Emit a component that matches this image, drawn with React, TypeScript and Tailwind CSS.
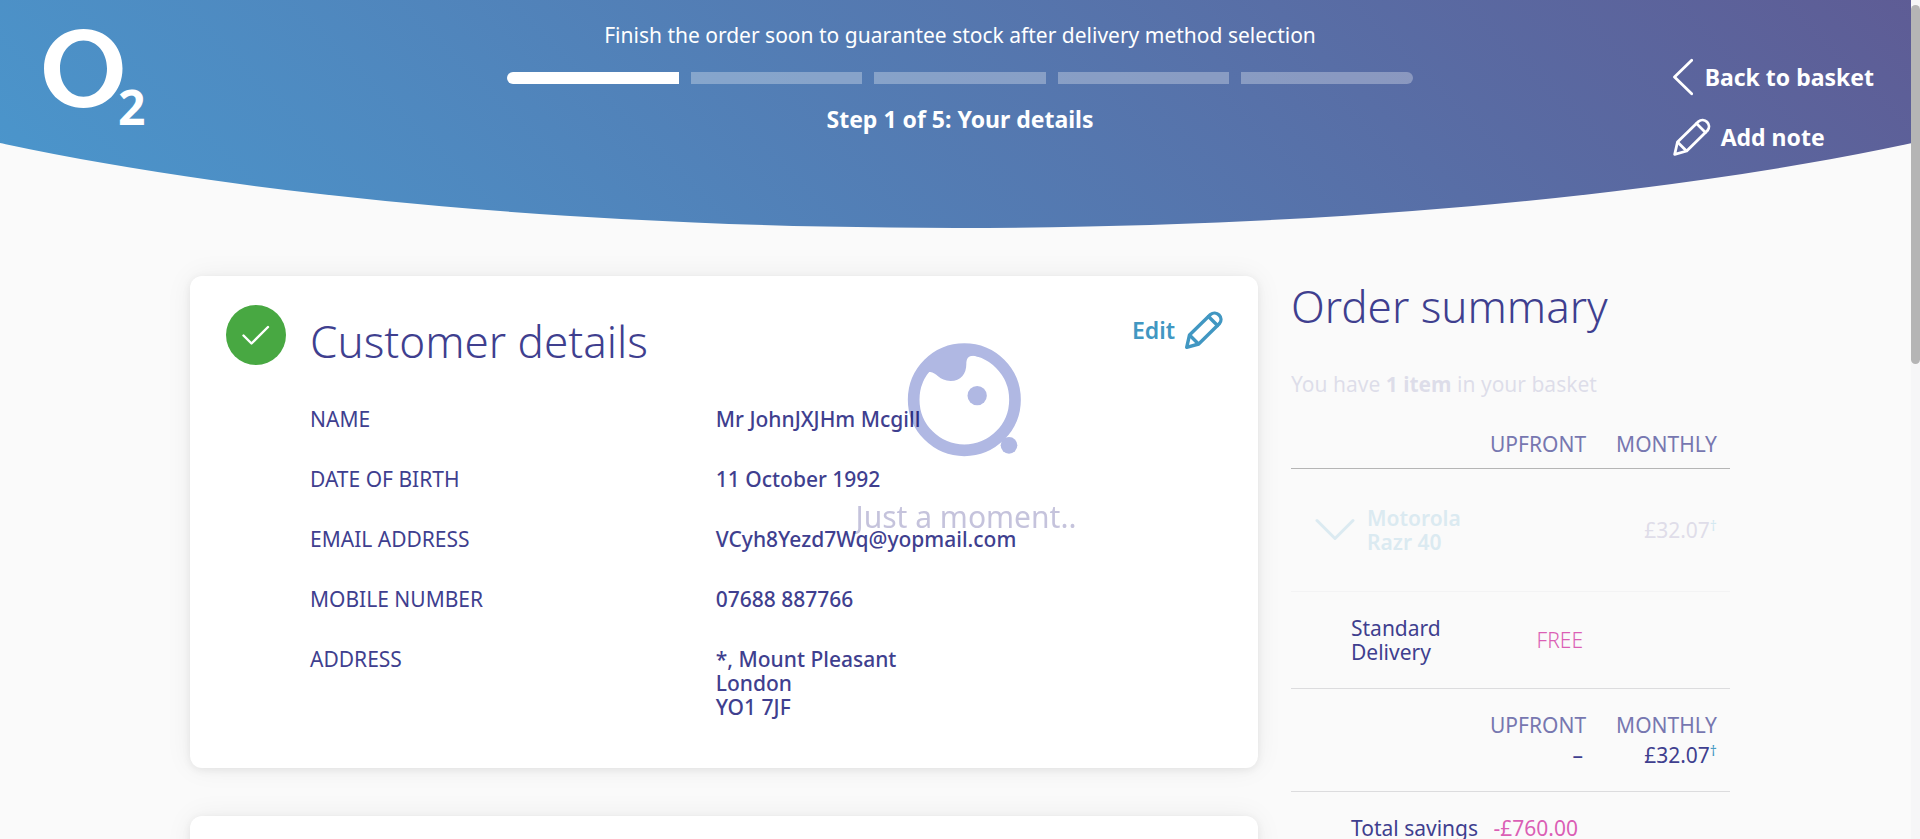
import type { ReactNode } from "react";

const details: { label: string; value: string[] }[] = [
  { label: "NAME", value: ["Mr JohnJXJHm Mcgill"] },
  { label: "DATE OF BIRTH", value: ["11 October 1992"] },
  { label: "EMAIL ADDRESS", value: ["VCyh8Yezd7Wq@yopmail.com"] },
  { label: "MOBILE NUMBER", value: ["07688 887766"] },
  { label: "ADDRESS", value: ["*, Mount Pleasant", "London", "YO1 7JF"] },
];

const TOTAL_STEPS = 5;
const CURRENT_STEP = 1;

function Logo() {
  return (
    <svg width="116" height="116" viewBox="0 0 116 116" role="img" aria-label="O2">
      <path
        fill="#fff"
        fillRule="evenodd"
        d="M39.500 0C62 0 78.500 16.500 78.500 39.500S62 79 39.500 79 0 62.500 0 39.500 17 0 39.500 0ZM39.500 11.500C26 11.500 16 23.500 16 39.500S26 67.700 39.500 67.700 63 55.500 63 39.500 53 11.500 39.500 11.500Z"
      />
      <text x="74" y="96" fill="#fff" fontSize="48" fontWeight="700" fontFamily="Noto Sans, sans-serif">
        2
      </text>
    </svg>
  );
}

function PencilIcon({ stroke = 2.8 }: { stroke?: number }) {
  return (
    <svg width="38" height="38" viewBox="0 0 38 38" fill="none" stroke="currentColor" strokeWidth={stroke} strokeLinejoin="round" strokeLinecap="round" aria-hidden="true">
      <path d="M1.700 36.300 4.500 24 25.500 3.500a6.400 6.400 0 0 1 9 9L13.700 33Z" />
      <path d="M23.500 5.500 32.500 14.500M5 24.500 13 32.500" />
    </svg>
  );
}

function BackIcon() {
  return (
    <svg width="20" height="38" viewBox="0 0 20 38" fill="none" stroke="currentColor" strokeWidth="2.800" strokeLinejoin="round" strokeLinecap="round" aria-hidden="true">
      <path d="M18.700 2.300 1.500 19l17.200 16.700" />
    </svg>
  );
}

function Header() {
  return (
    <header className="grid h-[228px] grid-cols-[1fr_minmax(0,906px)_1fr] bg-[linear-gradient(45deg,#4a97cd,#5e5c95)] text-white [clip-path:ellipse(70%_286px_at_calc(50%-4px)_-58px)]">
      <a href="#home" className="justify-self-start pt-[29px] pl-11">
        <Logo />
      </a>
      <div className="flex flex-col items-center pt-[23px]">
        <p className="text-[21px] leading-6">Finish the order soon to guarantee stock after delivery method selection</p>
        <div className="mt-[25px] flex w-full gap-3 overflow-hidden rounded-md">
          {Array.from({ length: TOTAL_STEPS }, (_, i) => (
            <span key={i} className={i < CURRENT_STEP ? "h-3 flex-1 bg-white" : "h-3 flex-1 bg-white/30"} />
          ))}
        </div>
        <p className="mt-[23px] text-[23px] leading-6 font-bold">Step 1 of 5: Your details</p>
      </div>
      <nav className="flex flex-col items-start gap-[22px] justify-self-end pt-[58px] pr-[46px] text-[23px] leading-6 font-bold">
        <a href="#basket" className="flex items-center gap-3">
          <BackIcon />
          Back to basket
        </a>
        <button type="button" className="flex items-center gap-2.5">
          <PencilIcon />
          Add note
        </button>
      </nav>
    </header>
  );
}

function Card({ children }: { children?: ReactNode }) {
  return (
    <section className="min-h-40 rounded-xl bg-white pt-[29px] pr-[35px] pb-[49px] pl-9 shadow-[0_2px_8px_rgba(0,0,0,0.07),0_0_28px_rgba(0,0,0,0.06)]">
      {children}
    </section>
  );
}

function CustomerDetails() {
  return (
    <Card>
      <div className="flex items-start">
        <span className="flex size-[60px] items-center justify-center rounded-full bg-[#48a842]">
          <svg width="28" height="20" viewBox="0 0 28 20" fill="none" stroke="#fff" strokeWidth="2.400" strokeLinejoin="round" strokeLinecap="round" aria-hidden="true">
            <path d="m1.500 10.500 8 8L26 2" />
          </svg>
        </span>
        <h2 className="mt-1.5 ml-6 flex-1 text-[44px] leading-[60px] font-light">Customer details</h2>
        <button type="button" className="mt-1.5 flex items-center gap-2.5 text-[23px] leading-6 font-semibold text-[#4197c2]">
          Edit
          <PencilIcon stroke={3.4} />
        </button>
      </div>
      <dl className="mt-9 flex flex-col gap-9 pl-[84px] text-[21px] leading-6">
        {details.map((row) => (
          <div key={row.label} className="grid grid-cols-[4fr_5fr]">
            <dt>{row.label}</dt>
            <dd className="font-medium">
              {row.value.map((line) => (
                <span key={line} className="block">
                  {line}
                </span>
              ))}
            </dd>
          </div>
        ))}
      </dl>
    </Card>
  );
}

function OrderSummary() {
  return (
    <aside className="w-[439px] shrink-0">
      <h2 className="text-[44px] leading-[60px] font-light">Order summary</h2>
      <p className="mt-9 text-[21px] leading-6 opacity-15">
        You have <strong className="font-bold">1 item</strong> in your basket
      </p>
      <table className="mt-9 w-full table-fixed border-collapse text-[21px] leading-6">
        <colgroup>
          <col />
          <col className="w-[107px]" />
          <col className="w-[133px]" />
        </colgroup>
        <thead>
          <tr className="border-b border-[#b5b5b5] text-right text-[#7777b0]">
            <td />
            <th scope="col" className="pr-3.5 pb-3 text-right font-normal">UPFRONT</th>
            <th scope="col" className="pr-[13px] pb-3 text-right font-normal">MONTHLY</th>
          </tr>
        </thead>
        <tbody>
          <tr className="border-b border-[#f3f3f4]">
            <td className="py-[37px] pl-6">
              <button type="button" className="flex w-full items-center gap-3 text-left font-semibold text-[#dbeaf1]">
                <svg width="40" height="24" viewBox="0 0 40 24" fill="none" stroke="currentColor" strokeWidth="3" strokeLinejoin="round" strokeLinecap="round" className="shrink-0" aria-hidden="true">
                  <path d="m2 2.500 18 18 18-18" />
                </svg>
                <span className="w-28">Motorola Razr 40</span>
              </button>
            </td>
            <td />
            <td className="pr-[13px] text-right text-[#dfdde9]">
              £32.07<sup className="text-[14px] leading-none text-[#d3e8f1]">†</sup>
            </td>
          </tr>
          <tr className="border-b border-[#dcdcde]">
            <td className="py-6 pl-[60px]">
              Standard
              <br />
              Delivery
            </td>
            <td className="pr-3.5 text-right font-light text-[#db5fb5]">FREE</td>
            <td />
          </tr>
          <tr className="text-right text-[#7777b0]">
            <td />
            <td className="pt-6 pr-3.5">UPFRONT</td>
            <td className="pt-6 pr-[13px]">MONTHLY</td>
          </tr>
          <tr className="border-b border-[#dcdcde] text-right">
            <td />
            <td className="pt-1.5 pr-3.5 pb-6">–</td>
            <td className="pt-1.5 pr-[13px] pb-6">
              £32.07<sup className="text-[14px] leading-none text-[#4197c2]">†</sup>
            </td>
          </tr>
          <tr>
            <td className="pt-6 pl-[60px] whitespace-nowrap">Total savings</td>
            <td className="pt-6 pr-[19px] text-right text-[#db5fb5]">-£760.00</td>
            <td />
          </tr>
        </tbody>
      </table>
    </aside>
  );
}

function Loader() {
  return (
    <div role="status" className="pointer-events-none fixed inset-0 flex flex-col items-center pt-[341px] pl-3 mix-blend-multiply">
      <svg width="118" height="118" viewBox="201 63 354 354" aria-hidden="true">
        <g fill="#b0b8e3">
          <circle cx="373" cy="239" r="152" fill="none" stroke="#b0b8e3" strokeWidth="35" />
          <path d="M236 180C248 164 260 156 271 156C288 156 298 183 332 183C362 183 379 162 379 132C379 114 386 106 402 107L420 112 400 85 330 85 250 130Z" />
          <circle cx="411.500" cy="227" r="29" />
          <circle cx="507" cy="376" r="25" />
        </g>
      </svg>
      <p className="mt-10 text-[30px] leading-9 text-[#c5c3dc]">Just a moment..</p>
    </div>
  );
}

export default function App() {
  return (
    <div className="h-screen overflow-hidden bg-[#fafafa] font-['Noto_Sans',sans-serif] text-[#3f3f8f]">
      <Header />
      <main className="mx-auto mt-12 flex w-full max-w-[1540px] gap-[33px]">
        <div className="flex min-w-0 flex-1 flex-col gap-12">
          <CustomerDetails />
          <Card />
        </div>
        <OrderSummary />
      </main>
      <Loader />
      <div className="fixed inset-y-0 right-0 w-[9px] bg-[#f6f6f7] pt-[5px]" aria-hidden="true">
        <div className="h-[43%] rounded-full bg-[#b5b5b5]" />
      </div>
    </div>
  );
}
